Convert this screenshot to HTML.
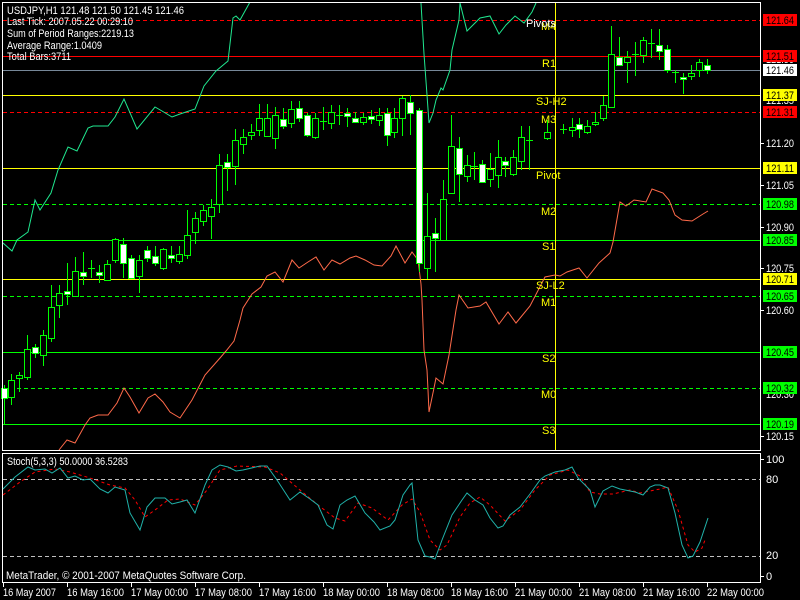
<!DOCTYPE html>
<html><head><meta charset="utf-8"><style>
html,body{margin:0;padding:0;background:#000;width:800px;height:600px;overflow:hidden}
svg{display:block}
text{font-family:"Liberation Sans",sans-serif;font-size:11px}
</style></head><body>
<svg width="800" height="600" viewBox="0 0 800 600" shape-rendering="crispEdges">
<rect width="800" height="600" fill="#000"/>
<g stroke-width="1">
<line x1="3" y1="20.5" x2="760" y2="20.5" stroke="#f00" stroke-dasharray="4,3"/>
<line x1="3" y1="56.5" x2="760" y2="56.5" stroke="#f00"/>
<line x1="3" y1="70.5" x2="760" y2="70.5" stroke="#778899"/>
<line x1="3" y1="95.5" x2="760" y2="95.5" stroke="#ff0"/>
<line x1="3" y1="112.5" x2="760" y2="112.5" stroke="#f00" stroke-dasharray="4,3"/>
<line x1="3" y1="168.5" x2="760" y2="168.5" stroke="#ff0"/>
<line x1="3" y1="204.5" x2="760" y2="204.5" stroke="#0f0" stroke-dasharray="4,3"/>
<line x1="3" y1="240.5" x2="760" y2="240.5" stroke="#0f0"/>
<line x1="3" y1="279.5" x2="760" y2="279.5" stroke="#ff0"/>
<line x1="3" y1="296.5" x2="760" y2="296.5" stroke="#0f0" stroke-dasharray="4,3"/>
<line x1="3" y1="352.5" x2="760" y2="352.5" stroke="#0f0"/>
<line x1="3" y1="388.5" x2="760" y2="388.5" stroke="#0f0" stroke-dasharray="4,3"/>
<line x1="3" y1="424.5" x2="760" y2="424.5" stroke="#0f0"/>
<line x1="555.5" y1="3" x2="555.5" y2="450" stroke="#ff0"/>
</g>
<g fill="none" stroke-width="1" shape-rendering="auto">
<polyline stroke="#20e890" points="3,243 12,251 17,240 28,232 35,200 40,210 51,193 58,170 68,147 77,151 88,128 93,126 108,126 115,117 124,99 137,129 155,107 162,111 172,117 180,114 195,109 204,86 216,71 228,61 233,18 236,16 240,20 250,2"/>
<polyline stroke="#20e890" points="421,3 424,54 427,95 429,123 433,113 436,100 441,88 443,90 450,70 452,50 459,20 460,3 467,31 480,18 490,16 499,34 506,25 515,16 524,23 532,12 536,3"/>
<polyline stroke="#ff6a4a" points="59,450 67,440 75,443 85,425 90,418 98,415 108,415 117,403 124,388 130,397 139,413 148,398 155,394 163,402 170,412 180,418 192,400 205,375 220,358 226,351 234,341 240,320 243,308 252,294 261,287 267,276 275,272 283,282 292,260 299,268 308,262 316,257 324,270 332,260 340,264 350,258 356,256 365,260 374,265 382,266 391,256 396,246 405,263 412,252 418,260 421,284 422,300 424,350 427,370 428,390 429,412 434,388 436,378 443,384 449,355 456,310 459,295 468,308 480,306 486,302 499,324 508,312 516,323 530,306 545,277 555,275 560,276 567,272 579,268 587,278 599,263 610,253 613,242 620,202 626,206 634,200 646,202 652,189 663,193 669,200 675,215 682,220 692,221 703,214 708,211"/>
</g>
<g stroke="#0f0" fill="#000">
<line x1="4.5" y1="385" x2="4.5" y2="424"/><rect x="1.5" y="388.5" width="6" height="10" fill="#fff"/>
<line x1="11.5" y1="374" x2="11.5" y2="405"/><rect x="8.5" y="380.5" width="6" height="17"/>
<line x1="19.5" y1="372" x2="19.5" y2="392"/><rect x="16.5" y="375.5" width="6" height="3"/>
<line x1="27.5" y1="335" x2="27.5" y2="380"/><rect x="24.5" y="349.5" width="6" height="28"/>
<line x1="35.5" y1="344" x2="35.5" y2="358"/><rect x="32.5" y="347.5" width="6" height="6" fill="#fff"/>
<line x1="43.5" y1="330" x2="43.5" y2="366"/><rect x="40.5" y="335.5" width="6" height="20"/>
<line x1="51.5" y1="285" x2="51.5" y2="342"/><rect x="48.5" y="307.5" width="6" height="31"/>
<line x1="59.5" y1="285" x2="59.5" y2="318"/><rect x="56.5" y="293.5" width="6" height="12"/>
<line x1="67.5" y1="263" x2="67.5" y2="305"/><rect x="64.5" y="291.5" width="6" height="3" fill="#fff"/>
<line x1="75.5" y1="257" x2="75.5" y2="296"/><rect x="72.5" y="271.5" width="6" height="25"/>
<line x1="83.5" y1="252" x2="83.5" y2="285"/><rect x="80.5" y="272.5" width="6" height="4" fill="#fff"/>
<line x1="91.5" y1="260" x2="91.5" y2="278"/><line x1="88" y1="268.5" x2="95" y2="268.5"/>
<line x1="99.5" y1="265" x2="99.5" y2="283"/><rect x="96.5" y="272.5" width="6" height="3" fill="#fff"/>
<line x1="107.5" y1="260" x2="107.5" y2="280"/><rect x="104.5" y="264.5" width="6" height="16"/>
<line x1="115.5" y1="238" x2="115.5" y2="263"/><rect x="112.5" y="239.5" width="6" height="21"/>
<line x1="123.5" y1="238" x2="123.5" y2="278"/><rect x="120.5" y="244.5" width="6" height="19" fill="#fff"/>
<line x1="131.5" y1="255" x2="131.5" y2="278"/><rect x="128.5" y="258.5" width="6" height="20" fill="#fff"/>
<line x1="139.5" y1="255" x2="139.5" y2="293"/><rect x="136.5" y="260.5" width="6" height="16"/>
<line x1="147.5" y1="246" x2="147.5" y2="262"/><rect x="144.5" y="250.5" width="6" height="8" fill="#fff"/>
<line x1="155.5" y1="246" x2="155.5" y2="266"/><rect x="152.5" y="256.5" width="6" height="7" fill="#fff"/>
<line x1="163.5" y1="248" x2="163.5" y2="270"/><rect x="160.5" y="249.5" width="6" height="19"/>
<line x1="171.5" y1="246" x2="171.5" y2="263"/><rect x="168.5" y="255.5" width="6" height="3" fill="#fff"/>
<line x1="179.5" y1="246" x2="179.5" y2="264"/><rect x="176.5" y="254.5" width="6" height="7"/>
<line x1="187.5" y1="210" x2="187.5" y2="259"/><rect x="184.5" y="235.5" width="6" height="20"/>
<line x1="195.5" y1="212" x2="195.5" y2="244"/><rect x="192.5" y="218.5" width="6" height="14"/>
<line x1="203.5" y1="205" x2="203.5" y2="226"/><rect x="200.5" y="210.5" width="6" height="11"/>
<line x1="211.5" y1="199" x2="211.5" y2="239"/><rect x="208.5" y="207.5" width="6" height="9"/>
<line x1="219.5" y1="154" x2="219.5" y2="213"/><rect x="216.5" y="165.5" width="6" height="39"/>
<line x1="227.5" y1="154" x2="227.5" y2="191"/><rect x="224.5" y="162.5" width="6" height="5" fill="#fff"/>
<line x1="235.5" y1="129" x2="235.5" y2="185"/><rect x="232.5" y="140.5" width="6" height="26"/>
<line x1="243.5" y1="129" x2="243.5" y2="154"/><rect x="240.5" y="137.5" width="6" height="7"/>
<line x1="251.5" y1="124" x2="251.5" y2="140"/><rect x="248.5" y="132.5" width="6" height="3"/>
<line x1="259.5" y1="104" x2="259.5" y2="136"/><rect x="256.5" y="118.5" width="6" height="12"/>
<line x1="267.5" y1="104" x2="267.5" y2="136"/><rect x="264.5" y="118.5" width="6" height="18"/>
<line x1="275.5" y1="107" x2="275.5" y2="149"/><rect x="272.5" y="115.5" width="6" height="23"/>
<line x1="283.5" y1="108" x2="283.5" y2="129"/><rect x="280.5" y="119.5" width="6" height="7" fill="#fff"/>
<line x1="291.5" y1="101" x2="291.5" y2="128"/><rect x="288.5" y="109.5" width="6" height="14"/>
<line x1="299.5" y1="101" x2="299.5" y2="122"/><rect x="296.5" y="108.5" width="6" height="10" fill="#fff"/>
<line x1="307.5" y1="113" x2="307.5" y2="137"/><rect x="304.5" y="115.5" width="6" height="20" fill="#fff"/>
<line x1="315.5" y1="113" x2="315.5" y2="139"/><rect x="312.5" y="118.5" width="6" height="19"/>
<line x1="323.5" y1="107" x2="323.5" y2="130"/><line x1="320" y1="121.5" x2="327" y2="121.5"/>
<line x1="331.5" y1="105" x2="331.5" y2="129"/><rect x="328.5" y="112.5" width="6" height="11"/>
<line x1="339.5" y1="105" x2="339.5" y2="125"/><line x1="336" y1="115.5" x2="343" y2="115.5"/>
<line x1="347.5" y1="108" x2="347.5" y2="127"/><rect x="344.5" y="113.5" width="6" height="3" fill="#fff"/>
<line x1="355.5" y1="112" x2="355.5" y2="123"/><rect x="352.5" y="118.5" width="6" height="4" fill="#fff"/>
<line x1="363.5" y1="113" x2="363.5" y2="125"/><rect x="360.5" y="117.5" width="6" height="5"/>
<line x1="371.5" y1="110" x2="371.5" y2="124"/><rect x="368.5" y="116.5" width="6" height="3" fill="#fff"/>
<line x1="379.5" y1="108" x2="379.5" y2="126"/><rect x="376.5" y="115.5" width="6" height="5"/>
<line x1="387.5" y1="108" x2="387.5" y2="146"/><rect x="384.5" y="113.5" width="6" height="22" fill="#fff"/>
<line x1="394.5" y1="108" x2="394.5" y2="138"/><rect x="391.5" y="118.5" width="6" height="14"/>
<line x1="402.5" y1="96" x2="402.5" y2="136"/><rect x="399.5" y="98.5" width="6" height="20"/>
<line x1="410.5" y1="95" x2="410.5" y2="135"/><rect x="407.5" y="102.5" width="6" height="11" fill="#fff"/>
<line x1="419.5" y1="108" x2="419.5" y2="272"/><rect x="416.5" y="110.5" width="6" height="153" fill="#fff"/>
<line x1="427.5" y1="193" x2="427.5" y2="279"/><rect x="424.5" y="236.5" width="6" height="32"/>
<line x1="435.5" y1="218" x2="435.5" y2="272"/><rect x="432.5" y="233.5" width="6" height="5" fill="#fff"/>
<line x1="443.5" y1="180" x2="443.5" y2="240"/><rect x="440.5" y="199.5" width="6" height="41"/>
<line x1="451.5" y1="115" x2="451.5" y2="193"/><rect x="448.5" y="146.5" width="6" height="47"/>
<line x1="459.5" y1="137" x2="459.5" y2="202"/><rect x="456.5" y="148.5" width="6" height="26" fill="#fff"/>
<line x1="467.5" y1="155" x2="467.5" y2="182"/><rect x="464.5" y="165.5" width="6" height="11"/>
<line x1="474.5" y1="152" x2="474.5" y2="180"/><line x1="471" y1="166.5" x2="478" y2="166.5"/>
<line x1="482.5" y1="160" x2="482.5" y2="183"/><rect x="479.5" y="164.5" width="6" height="18" fill="#fff"/>
<line x1="490.5" y1="153" x2="490.5" y2="187"/><rect x="487.5" y="169.5" width="6" height="10"/>
<line x1="498.5" y1="140" x2="498.5" y2="188"/><rect x="495.5" y="157.5" width="6" height="18"/>
<line x1="505.5" y1="157" x2="505.5" y2="177"/><rect x="502.5" y="161.5" width="6" height="4" fill="#fff"/>
<line x1="513.5" y1="150" x2="513.5" y2="176"/><rect x="510.5" y="157.5" width="6" height="17"/>
<line x1="521.5" y1="126" x2="521.5" y2="170"/><rect x="518.5" y="137.5" width="6" height="24"/>
<line x1="529.5" y1="126" x2="529.5" y2="170"/><line x1="526" y1="140.5" x2="533" y2="140.5"/>
<line x1="547.5" y1="120" x2="547.5" y2="140"/><rect x="544.5" y="132.5" width="6" height="6"/>
<line x1="563.5" y1="124" x2="563.5" y2="134"/><line x1="560" y1="129.5" x2="567" y2="129.5"/>
<line x1="572.5" y1="118" x2="572.5" y2="137"/><rect x="569.5" y="127.5" width="6" height="3"/>
<line x1="579.5" y1="118" x2="579.5" y2="138"/><rect x="576.5" y="124.5" width="6" height="5" fill="#fff"/>
<line x1="587.5" y1="120" x2="587.5" y2="134"/><rect x="584.5" y="126.5" width="6" height="6"/>
<line x1="595.5" y1="112" x2="595.5" y2="126"/><rect x="592.5" y="122.5" width="6" height="2"/>
<line x1="603.5" y1="96" x2="603.5" y2="121"/><rect x="600.5" y="105.5" width="6" height="13"/>
<line x1="611.5" y1="26" x2="611.5" y2="107"/><rect x="608.5" y="54.5" width="6" height="53"/>
<line x1="619.5" y1="37" x2="619.5" y2="66"/><rect x="616.5" y="57.5" width="6" height="8" fill="#fff"/>
<line x1="627.5" y1="51" x2="627.5" y2="83"/><rect x="624.5" y="57.5" width="6" height="5"/>
<line x1="635.5" y1="42" x2="635.5" y2="76"/><line x1="632" y1="54.5" x2="639" y2="54.5"/>
<line x1="643.5" y1="37" x2="643.5" y2="63"/><rect x="640.5" y="40.5" width="6" height="15"/>
<line x1="651.5" y1="29" x2="651.5" y2="58"/><line x1="648" y1="43.5" x2="655" y2="43.5"/>
<line x1="659.5" y1="29" x2="659.5" y2="60"/><rect x="656.5" y="45.5" width="6" height="6" fill="#fff"/>
<line x1="667.5" y1="45" x2="667.5" y2="73"/><rect x="664.5" y="49.5" width="6" height="21" fill="#fff"/>
<line x1="675.5" y1="70" x2="675.5" y2="83"/><line x1="672" y1="72.5" x2="679" y2="72.5"/>
<line x1="683.5" y1="73" x2="683.5" y2="94"/><rect x="680.5" y="77.5" width="6" height="2" fill="#fff"/>
<line x1="691.5" y1="65" x2="691.5" y2="80"/><rect x="688.5" y="73.5" width="6" height="3"/>
<line x1="699.5" y1="59" x2="699.5" y2="77"/><rect x="696.5" y="62.5" width="6" height="8"/>
<line x1="707.5" y1="59" x2="707.5" y2="74"/><rect x="704.5" y="65.5" width="6" height="5" fill="#fff"/>
</g>
<g fill="#ff0">
<text x="541" y="30">M4</text>
<text x="542" y="67">R1</text>
<text x="536" y="105">SJ-H2</text>
<text x="541" y="123">M3</text>
<text x="536" y="179">Pivot</text>
<text x="541" y="215">M2</text>
<text x="542" y="250">S1</text>
<text x="536" y="289">SJ-L2</text>
<text x="541" y="306">M1</text>
<text x="542" y="362">S2</text>
<text x="541" y="398">M0</text>
<text x="542" y="434">S3</text>
</g>
<text x="526" y="27" fill="#fff">Pivots</text>
<g fill="#fff">
<text x="7" y="14" textLength="177" lengthAdjust="spacingAndGlyphs">USDJPY,H1  121.48 121.50 121.45 121.46</text>
<text x="7" y="25" textLength="126" lengthAdjust="spacingAndGlyphs">Last Tick: 2007.05.22 00:29:10</text>
<text x="7" y="37" textLength="127" lengthAdjust="spacingAndGlyphs">Sum of Period Ranges:2219.13</text>
<text x="7" y="49" textLength="95" lengthAdjust="spacingAndGlyphs">Average Range:1.0409</text>
<text x="7" y="60" textLength="64" lengthAdjust="spacingAndGlyphs">Total Bars:3711</text>
</g>
<g stroke="#fff" fill="none">
<rect x="2.5" y="2.5" width="758" height="448"/>
<rect x="2.5" y="453.5" width="758" height="129"/>
</g>
<g stroke="#fff">
<line x1="761" y1="143.5" x2="764" y2="143.5"/><line x1="761" y1="185.5" x2="764" y2="185.5"/>
<line x1="761" y1="227.5" x2="764" y2="227.5"/><line x1="761" y1="268.5" x2="764" y2="268.5"/>
<line x1="761" y1="310.5" x2="764" y2="310.5"/><line x1="761" y1="436.5" x2="764" y2="436.5"/>
<line x1="761" y1="459.5" x2="764" y2="459.5"/><line x1="761" y1="576.5" x2="764" y2="576.5"/>
</g>
<g fill="#fff">
<text x="766" y="147" textLength="28" lengthAdjust="spacingAndGlyphs">121.20</text><text x="766" y="189" textLength="28" lengthAdjust="spacingAndGlyphs">121.05</text>
<text x="766" y="231" textLength="28" lengthAdjust="spacingAndGlyphs">120.90</text><text x="766" y="272" textLength="28" lengthAdjust="spacingAndGlyphs">120.75</text>
<text x="766" y="314" textLength="28" lengthAdjust="spacingAndGlyphs">120.60</text><text x="766" y="440" textLength="28" lengthAdjust="spacingAndGlyphs">120.15</text>
<text x="766" y="63" textLength="28" lengthAdjust="spacingAndGlyphs">121.50</text><text x="766" y="104" textLength="28" lengthAdjust="spacingAndGlyphs">121.35</text>
<text x="766" y="398" textLength="28" lengthAdjust="spacingAndGlyphs">120.30</text>
<text x="766" y="463">100</text><text x="766" y="483">80</text>
<text x="766" y="559">20</text><text x="766" y="580">0</text>
</g>
<g>
<rect x="763" y="14" width="34" height="12" fill="#f00"/>
<rect x="763" y="50" width="34" height="12" fill="#f00"/>
<rect x="763" y="64" width="34" height="12" fill="#fff"/>
<rect x="763" y="89" width="34" height="12" fill="#ff0"/>
<rect x="763" y="106" width="34" height="12" fill="#f00"/>
<rect x="763" y="162" width="34" height="12" fill="#ff0"/>
<rect x="763" y="198" width="34" height="12" fill="#0f0"/>
<rect x="763" y="234" width="34" height="12" fill="#0f0"/>
<rect x="763" y="273" width="34" height="12" fill="#ff0"/>
<rect x="763" y="290" width="34" height="12" fill="#0f0"/>
<rect x="763" y="346" width="34" height="12" fill="#0f0"/>
<rect x="763" y="382" width="34" height="12" fill="#0f0"/>
<rect x="763" y="418" width="34" height="12" fill="#0f0"/>
</g>
<g fill="#000">
<text x="766" y="24" textLength="28" lengthAdjust="spacingAndGlyphs">121.64</text><text x="766" y="60" textLength="28" lengthAdjust="spacingAndGlyphs">121.51</text>
<text x="766" y="74" textLength="28" lengthAdjust="spacingAndGlyphs">121.46</text><text x="766" y="99" textLength="28" lengthAdjust="spacingAndGlyphs">121.37</text>
<text x="766" y="116" textLength="28" lengthAdjust="spacingAndGlyphs">121.31</text><text x="766" y="172" textLength="28" lengthAdjust="spacingAndGlyphs">121.11</text>
<text x="766" y="208" textLength="28" lengthAdjust="spacingAndGlyphs">120.98</text><text x="766" y="244" textLength="28" lengthAdjust="spacingAndGlyphs">120.85</text>
<text x="766" y="283" textLength="28" lengthAdjust="spacingAndGlyphs">120.71</text><text x="766" y="300" textLength="28" lengthAdjust="spacingAndGlyphs">120.65</text>
<text x="766" y="356" textLength="28" lengthAdjust="spacingAndGlyphs">120.45</text><text x="766" y="392" textLength="28" lengthAdjust="spacingAndGlyphs">120.32</text>
<text x="766" y="428" textLength="28" lengthAdjust="spacingAndGlyphs">120.19</text>
</g>
<g stroke="#c0c0c0" stroke-dasharray="4,3">
<line x1="3" y1="479.5" x2="760" y2="479.5"/>
<line x1="3" y1="556.5" x2="760" y2="556.5"/>
</g>
<g fill="none" shape-rendering="auto">
<polyline stroke="#f00" stroke-dasharray="3,3" points="3,495 20,482 35,472 55,469 70,472 90,478 110,485 125,488 135,500 145,517 155,510 168,500 180,499 195,505 207,490 220,470 237,466 265,467 280,473 300,490 318,505 335,518 345,521 358,503 372,508 388,520 402,505 412,499 420,512 430,540 440,550 447,545 460,517 470,503 480,497 490,505 505,521 520,510 535,490 550,475 568,470 580,476 590,492 600,494 613,494 630,490 640,493 660,489 668,487 678,510 688,545 695,552 702,548 705,540"/>
<polyline stroke="#20b2aa" points="3,489 15,477 28,467 35,470 45,469 52,473 60,468 68,478 75,476 83,480 90,479 100,489 108,493 115,487 125,490 130,513 140,530 147,507 155,498 165,498 172,504 180,502 187,500 195,513 205,485 212,470 220,465 228,467 236,471 243,470 260,466 267,466 277,480 290,500 300,492 310,499 318,505 327,525 333,529 340,505 347,500 355,496 365,513 374,522 380,530 390,526 395,520 403,495 410,485 412,483 418,540 425,556 430,557 435,559 442,540 452,515 462,500 467,493 475,500 483,505 490,518 498,528 503,526 510,515 520,507 530,494 540,480 545,476 555,472 565,470 572,467 578,478 590,490 595,507 603,491 612,486 620,489 635,492 643,495 650,487 655,485 660,485 668,488 675,513 682,545 688,558 693,556 700,542 708,518"/>
</g>
<text x="7" y="465" fill="#fff" textLength="121" lengthAdjust="spacingAndGlyphs">Stoch(5,3,3) 50.0000 36.5283</text>
<text x="6" y="579" fill="#fff" textLength="240" lengthAdjust="spacingAndGlyphs">MetaTrader, © 2001-2007 MetaQuotes Software Corp.</text>
<g stroke="#fff">
<line x1="3.5" y1="583" x2="3.5" y2="587"/><line x1="67.5" y1="583" x2="67.5" y2="587"/>
<line x1="131.5" y1="583" x2="131.5" y2="587"/><line x1="195.5" y1="583" x2="195.5" y2="587"/>
<line x1="259.5" y1="583" x2="259.5" y2="587"/><line x1="323.5" y1="583" x2="323.5" y2="587"/>
<line x1="387.5" y1="583" x2="387.5" y2="587"/><line x1="451.5" y1="583" x2="451.5" y2="587"/>
<line x1="515.5" y1="583" x2="515.5" y2="587"/><line x1="579.5" y1="583" x2="579.5" y2="587"/>
<line x1="643.5" y1="583" x2="643.5" y2="587"/><line x1="707.5" y1="583" x2="707.5" y2="587"/>
</g>
<g fill="#fff">
<text x="3" y="596" textLength="53" lengthAdjust="spacingAndGlyphs">16 May 2007</text>
<text x="67" y="596" textLength="57" lengthAdjust="spacingAndGlyphs">16 May 16:00</text>
<text x="131" y="596" textLength="57" lengthAdjust="spacingAndGlyphs">17 May 00:00</text>
<text x="195" y="596" textLength="57" lengthAdjust="spacingAndGlyphs">17 May 08:00</text>
<text x="259" y="596" textLength="57" lengthAdjust="spacingAndGlyphs">17 May 16:00</text>
<text x="323" y="596" textLength="57" lengthAdjust="spacingAndGlyphs">18 May 00:00</text>
<text x="387" y="596" textLength="57" lengthAdjust="spacingAndGlyphs">18 May 08:00</text>
<text x="451" y="596" textLength="57" lengthAdjust="spacingAndGlyphs">18 May 16:00</text>
<text x="515" y="596" textLength="57" lengthAdjust="spacingAndGlyphs">21 May 00:00</text>
<text x="579" y="596" textLength="57" lengthAdjust="spacingAndGlyphs">21 May 08:00</text>
<text x="643" y="596" textLength="57" lengthAdjust="spacingAndGlyphs">21 May 16:00</text>
<text x="707" y="596" textLength="57" lengthAdjust="spacingAndGlyphs">22 May 00:00</text>
</g>
</svg>
</body></html>
